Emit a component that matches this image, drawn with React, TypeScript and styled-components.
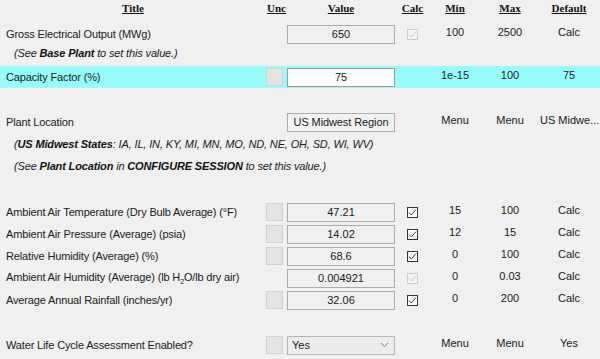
import React from 'react';
import styled, { createGlobalStyle } from 'styled-components';

const GlobalStyle = createGlobalStyle`
    html, body {
        margin: 0;
        padding: 0;
        background: #f0f0f0;
    }
    body {
        font-family: "Liberation Sans", Arial, sans-serif;
        font-size: 11px;
        color: #1a1a1a;
    }
`;

const Page = styled.div`
    width: 600px;
    height: 359px;
    overflow: hidden;
    background: #f0f0f0;
`;

const HeaderRow = styled.div`
    display: flex;
    height: 23px;
    padding-top: 2px;
    box-sizing: border-box;
`;

const Head = styled.div<{ $w: number }>`
    width: ${(p) => p.$w}px;
    text-align: center;
    font-family: "Liberation Serif", "Times New Roman", serif;
    font-weight: bold;
    font-size: 11px;
    text-decoration: underline;
    color: #111;
`;

const Row = styled.div<{ $hl?: boolean }>`
    display: flex;
    align-items: center;
    height: 22px;
    background: ${(p) => (p.$hl ? '#99fcfc' : 'transparent')};
`;

const Spacer = styled.div<{ $h: number }>`
    height: ${(p) => p.$h}px;
`;

const Label = styled.div`
    width: 266px;
    padding-left: 6px;
    box-sizing: border-box;
    letter-spacing: -0.15px;
    white-space: nowrap;
`;

const Note = styled.div<{ $h?: number }>`
    height: ${(p) => p.$h ?? 22}px;
    line-height: ${(p) => p.$h ?? 22}px;
    padding-left: 14px;
    font-style: italic;
    letter-spacing: -0.15px;
    white-space: nowrap;
    b {
        font-weight: bold;
        color: #111;
    }
`;

const UncCell = styled.div`
    width: 21px;
    height: 18px;
    display: flex;
`;

const UncBox = styled.div`
    width: 17px;
    height: 18px;
    box-sizing: border-box;
    background: #e4e4e4;
    border: 1px solid #d2d2d2;
`;

const Field = styled.div<{ $editable?: boolean }>`
    width: 108px;
    height: 19px;
    box-sizing: border-box;
    border: 1px solid ${(p) => (p.$editable ? '#9a9a9a' : '#ababab')};
    background: ${(p) => (p.$editable ? '#ffffff' : '#f0f0f0')};
    display: flex;
    align-items: center;
    justify-content: center;
    color: #1a1a1a;
`;

const MenuButton = styled(Field)`
    border-color: #adadad;
    background: #f2f2f2;
    letter-spacing: -0.1px;
`;

const Select = styled(Field)`
    justify-content: space-between;
    padding: 0 5px 0 4px;
    background: #ececec;
    border-color: #b4b4b4;
`;

const CalcCell = styled.div`
    width: 35px;
    display: flex;
    justify-content: center;
`;

const Check = styled.div<{ $disabled?: boolean }>`
    width: 11px;
    height: 11px;
    box-sizing: border-box;
    border: 1px solid ${(p) => (p.$disabled ? '#cccccc' : '#333333')};
    background: ${(p) => (p.$disabled ? '#f4f4f4' : '#ffffff')};
    display: flex;
    align-items: center;
    justify-content: center;
    svg {
        display: block;
    }
`;

const Num = styled.div<{ $w: number }>`
    width: ${(p) => p.$w}px;
    text-align: center;
    padding-bottom: 5px;
    white-space: nowrap;
`;

type Item = {
    label: React.ReactNode;
    value: string;
    unc?: boolean;
    calc?: 'on' | 'off' | 'none';
    min: string;
    max: string;
    def: string;
    editable?: boolean;
    hl?: boolean;
};

const CheckBox: React.FC<{ disabled?: boolean }> = ({ disabled }) => (
    <Check $disabled={disabled}>
        <svg width="9" height="9" viewBox="0 0 9 9">
            <path
                d="M1 4.6 L3.4 7 L8 1.6"
                fill="none"
                stroke={disabled ? '#c8c8c8' : '#3a3a3a'}
                strokeWidth="1"
            />
        </svg>
    </Check>
);

const Chevron = () => (
    <svg width="9" height="6" viewBox="0 0 9 6">
        <path d="M1 1 L4.5 4.5 L8 1" fill="none" stroke="#7a7a7a" strokeWidth="1" />
    </svg>
);

const NumCells: React.FC<{ min: string; max: string; def: string }> = ({ min, max, def }) => (
    <>
        <Num $w={50}>{min}</Num>
        <Num $w={60}>{max}</Num>
        <Num $w={58}>{def}</Num>
    </>
);

const DataRow: React.FC<{ item: Item }> = ({ item }) => (
    <Row $hl={item.hl}>
        <Label>{item.label}</Label>
        <UncCell>{item.unc && <UncBox />}</UncCell>
        <Field $editable={item.editable}>{item.value}</Field>
        <CalcCell>{item.calc && item.calc !== 'none' && <CheckBox disabled={item.calc === 'off'} />}</CalcCell>
        <NumCells min={item.min} max={item.max} def={item.def} />
    </Row>
);

const ambient: Item[] = [
    { label: 'Ambient Air Temperature (Dry Bulb Average) (°F)', value: '47.21', unc: true, calc: 'on', min: '15', max: '100', def: 'Calc' },
    { label: 'Ambient Air Pressure (Average) (psia)', value: '14.02', unc: true, calc: 'on', min: '12', max: '15', def: 'Calc' },
    { label: 'Relative Humidity (Average) (%)', value: '68.6', unc: true, calc: 'on', min: '0', max: '100', def: 'Calc' },
    {
        label: (
            <>
                Ambient Air Humidity (Average) (lb H<sub style={{ fontSize: '7px' }}>2</sub>O/lb dry air)
            </>
        ),
        value: '0.004921',
        calc: 'off',
        min: '0',
        max: '0.03',
        def: 'Calc',
    },
    { label: 'Average Annual Rainfall (inches/yr)', value: '32.06', unc: true, calc: 'on', min: '0', max: '200', def: 'Calc' },
];

export default function App() {
    return (
        <Page>
            <GlobalStyle />
            <HeaderRow>
                <Head $w={266}>Title</Head>
                <Head $w={21}>Unc</Head>
                <Head $w={108}>Value</Head>
                <Head $w={35}>Calc</Head>
                <Head $w={50}>Min</Head>
                <Head $w={60}>Max</Head>
                <Head $w={58}>Default</Head>
            </HeaderRow>

            <DataRow
                item={{ label: 'Gross Electrical Output (MWg)', value: '650', calc: 'off', min: '100', max: '2500', def: 'Calc' }}
            />
            <Note $h={16}>
                (See <b>Base Plant</b> to set this value.)
            </Note>
            <Spacer $h={5} />
            <DataRow
                item={{ label: 'Capacity Factor (%)', value: '75', unc: true, editable: true, min: '1e-15', max: '100', def: '75', hl: true }}
            />

            <Spacer $h={23} />
            <Row>
                <Label>Plant Location</Label>
                <UncCell />
                <MenuButton>US Midwest Region</MenuButton>
                <CalcCell />
                <NumCells min="Menu" max="Menu" def="US Midwe..." />
            </Row>
            <Note>
                (<b>US Midwest States</b>: IA, IL, IN, KY, MI, MN, MO, ND, NE, OH, SD, WI, WV)
            </Note>
            <Note>
                (See <b>Plant Location</b> in <b>CONFIGURE SESSION</b> to set this value.)
            </Note>

            <Spacer $h={24} />
            {ambient.map((item, i) => (
                <DataRow key={i} item={item} />
            ))}

            <Spacer $h={23} />
            <Row>
                <Label>Water Life Cycle Assessment Enabled?</Label>
                <UncCell>
                    <UncBox />
                </UncCell>
                <Select>
                    <span>Yes</span>
                    <Chevron />
                </Select>
                <CalcCell />
                <NumCells min="Menu" max="Menu" def="Yes" />
            </Row>
        </Page>
    );
}
